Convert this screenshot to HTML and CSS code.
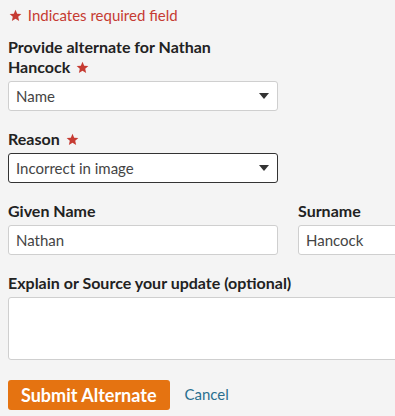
FILE: index.html
```html
<!DOCTYPE html>
<html lang="en">
<head>
    <meta charset="UTF-8">
    <meta name="viewport" content="width=device-width, initial-scale=1.0">
    <title>Provide Alternate</title>
    <link rel="stylesheet" href="styles.css">
</head>
<body>
    <form class="alternate-form">
        <p class="required-note">
            <svg class="star" viewBox="0 0 24 24" aria-hidden="true"><path d="M12 1.5l3.1 7.1 7.7.7-5.8 5.1 1.7 7.6L12 18l-6.7 4 1.7-7.6L1.2 9.3l7.7-.7z"/></svg>
            Indicates required field
        </p>

        <div class="field narrow">
            <label for="nameType">Provide alternate for Nathan <span class="nowrap">Hancock <svg class="star" viewBox="0 0 24 24" aria-hidden="true"><path d="M12 1.5l3.1 7.1 7.7.7-5.8 5.1 1.7 7.6L12 18l-6.7 4 1.7-7.6L1.2 9.3l7.7-.7z"/></svg></span></label>
            <div class="select-wrap">
                <select id="nameType" name="nameType">
                    <option>Name</option>
                </select>
            </div>
        </div>

        <div class="field narrow">
            <label for="reason">Reason <svg class="star" viewBox="0 0 24 24" aria-hidden="true"><path d="M12 1.5l3.1 7.1 7.7.7-5.8 5.1 1.7 7.6L12 18l-6.7 4 1.7-7.6L1.2 9.3l7.7-.7z"/></svg></label>
            <div class="select-wrap">
                <select id="reason" name="reason" class="active">
                    <option>Incorrect in image</option>
                </select>
            </div>
        </div>

        <div class="field-row">
            <div class="field">
                <label for="given">Given Name</label>
                <input type="text" id="given" name="given" value="Nathan">
            </div>
            <div class="field">
                <label for="surname">Surname</label>
                <input type="text" id="surname" name="surname" value="Hancock">
            </div>
        </div>

        <div class="field">
            <label for="explain">Explain or Source your update (optional)</label>
            <textarea id="explain" name="explain"></textarea>
        </div>

        <div class="actions">
            <button type="submit">Submit Alternate</button>
            <a href="#" class="cancel">Cancel</a>
        </div>
    </form>
</body>
</html>
```

FILE: styles.css
```css
html {
    overflow: hidden;
}

body {
    font-family: "Source Sans Pro", Lato, "Liberation Sans", sans-serif;
    font-size: 15px;
    line-height: 20px;
    margin: 0;
    padding: 0 8px;
    background-color: #f4f4f4;
    color: #222;
}

.alternate-form {
    width: 560px;
}

.star {
    width: 13px;
    height: 13px;
    fill: #c63b32;
    vertical-align: -1px;
}

.nowrap {
    white-space: nowrap;
}

.required-note {
    margin: 5px 0 12px;
    color: #c63b32;
}

.required-note .star {
    margin: 0 2px 0 1px;
}

.field {
    margin-bottom: 18px;
}

.field.narrow {
    width: 270px;
}

label {
    display: block;
    margin-bottom: 4px;
    font-size: 16px;
    font-weight: bold;
    color: #222;
}

label .star {
    margin-left: 2px;
}

.select-wrap {
    position: relative;
}

.select-wrap::after {
    content: "";
    position: absolute;
    right: 9px;
    top: 12px;
    border-left: 5px solid transparent;
    border-right: 5px solid transparent;
    border-top: 6px solid #333;
    pointer-events: none;
}

select, input, textarea {
    display: block;
    width: 100%;
    box-sizing: border-box;
    margin: 0;
    font-family: inherit;
    font-size: 15px;
    color: #444;
    background: #fff;
    border: 1px solid #cfcfcf;
    border-radius: 3px;
}

select, input {
    height: 30px;
    padding: 0 7px;
}

select {
    appearance: none;
    -webkit-appearance: none;
}

select.active {
    border-color: #333;
}

textarea {
    height: 63px;
    resize: vertical;
}

.field-row {
    display: grid;
    grid-template-columns: 270px 270px;
    column-gap: 20px;
}

.actions {
    display: flex;
    align-items: center;
    gap: 15px;
    margin-top: 20px;
}

button {
    height: 30px;
    padding: 0 13px;
    font-family: inherit;
    font-size: 18px;
    font-weight: bold;
    color: #fff;
    background: #e57311;
    border: none;
    border-radius: 3px;
    cursor: pointer;
}

.cancel {
    color: #2a6f8f;
    text-decoration: none;
    margin-bottom: 3px;
}
```
